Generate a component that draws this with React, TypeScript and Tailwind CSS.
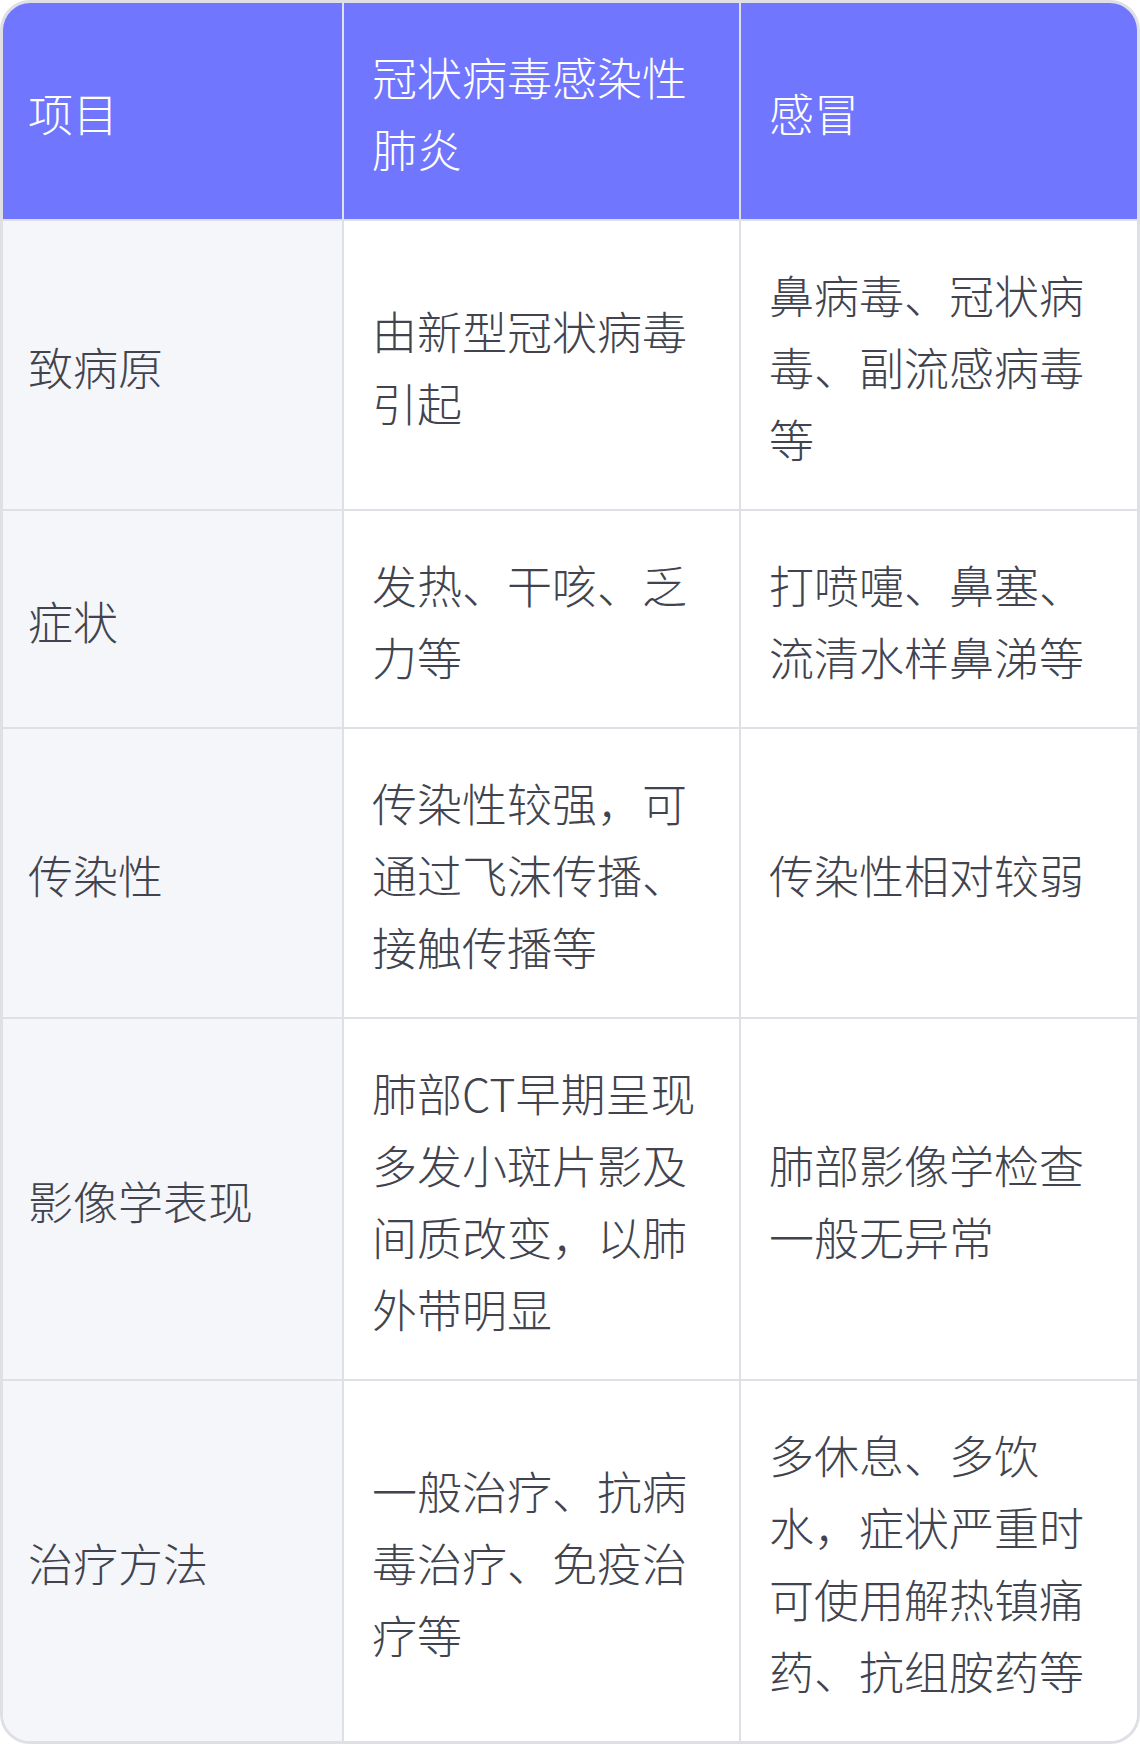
const rows = [
  {
    item: '致病原',
    covid: '由新型冠状病毒引起',
    cold: '鼻病毒、冠状病毒、副流感病毒等',
  },
  {
    item: '症状',
    covid: '发热、干咳、乏力等',
    cold: '打喷嚏、鼻塞、流清水样鼻涕等',
  },
  {
    item: '传染性',
    covid: '传染性较强，可通过飞沫传播、接触传播等',
    cold: '传染性相对较弱',
  },
  {
    item: '影像学表现',
    covid: '肺部CT早期呈现多发小斑片影及间质改变，以肺外带明显',
    cold: '肺部影像学检查一般无异常',
  },
  {
    item: '治疗方法',
    covid: '一般治疗、抗病毒治疗、免疫治疗等',
    cold: '多休息、多饮水，症状严重时可使用解热镇痛药、抗组胺药等',
  },
];

export default function App() {
  return (
    <div
      className="w-[1140px] bg-white"
      style={{ fontFamily: '"Noto Sans CJK SC", "Noto Sans", sans-serif' }}
    >
      <div className="overflow-hidden rounded-[30px] border-[3px] border-[#dfe0e5]">
        <table className="w-full table-fixed border-collapse text-[45px] font-light leading-[72px]">
          <colgroup>
            <col className="w-[340px]" />
            <col className="w-[397px]" />
            <col />
          </colgroup>
          <thead>
            <tr className="bg-[#7176ff] text-white">
              <th className="pl-[25px] pr-7 pt-[38px] pb-[34px] text-left align-middle font-light">项目</th>
              <th className="border-l-2 border-[#dfe0e5] px-7 pt-[38px] pb-[34px] text-left align-middle font-light">
                冠状病毒感染性肺炎
              </th>
              <th className="border-l-2 border-[#dfe0e5] px-7 pt-[38px] pb-[34px] text-left align-middle font-light">
                感冒
              </th>
            </tr>
          </thead>
          <tbody className="text-[#41444f]">
            {rows.map((r) => (
              <tr key={r.item} className="border-t-2 border-[#dfe0e5]">
                <td className="bg-[#f5f6fa] pl-[25px] pr-7 pt-[38px] pb-[34px] align-middle">{r.item}</td>
                <td className="border-l-2 border-[#dfe0e5] bg-white px-7 pt-[38px] pb-[34px] align-middle">
                  {r.covid}
                </td>
                <td className="border-l-2 border-[#dfe0e5] bg-white px-7 pt-[38px] pb-[34px] align-middle">
                  {r.cold}
                </td>
              </tr>
            ))}
          </tbody>
        </table>
      </div>
    </div>
  );
}
